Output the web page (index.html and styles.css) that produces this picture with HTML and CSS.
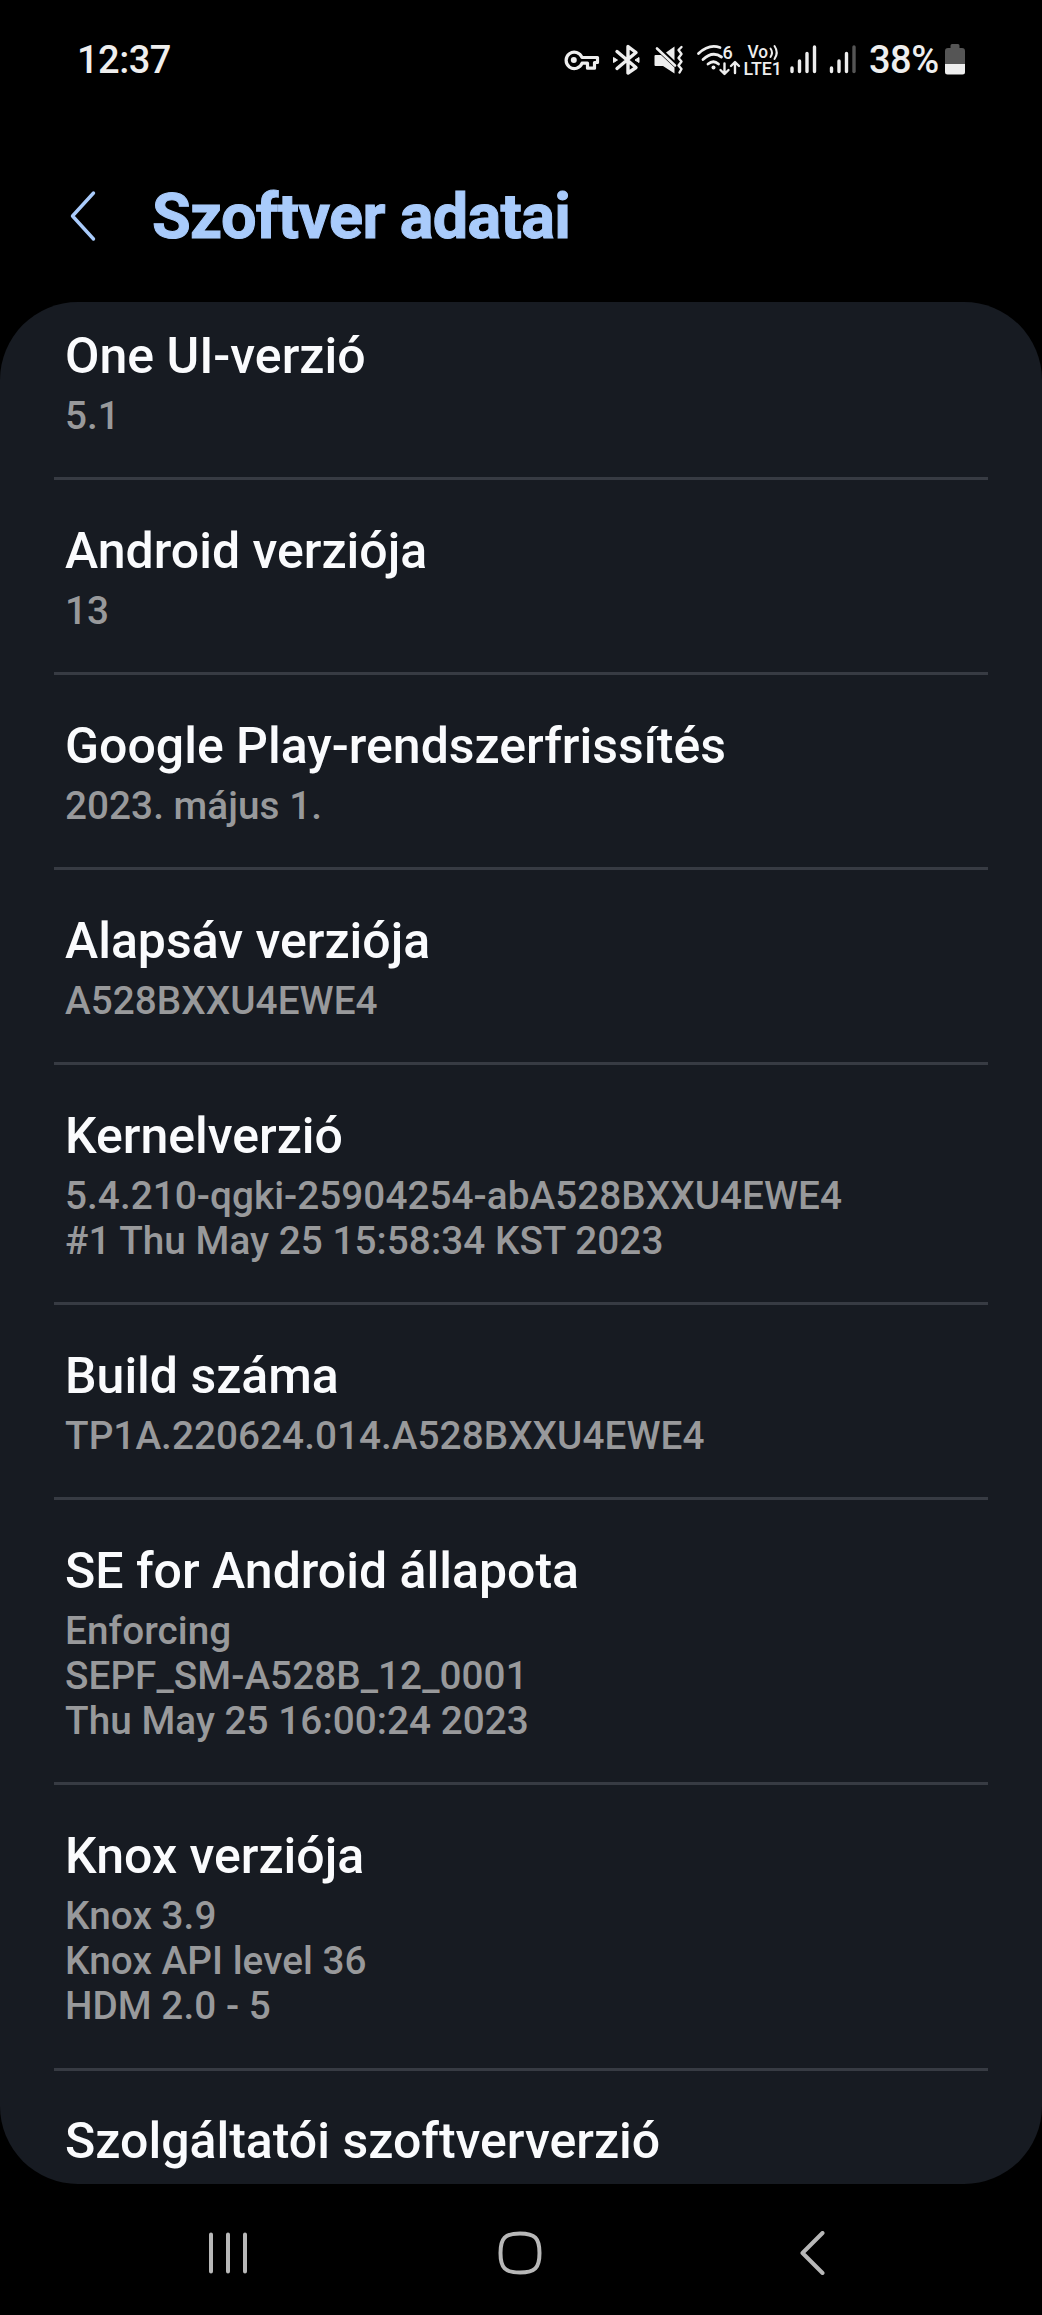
FILE: index.html
```html
<!DOCTYPE html>
<html lang="hu">
<head>
    <meta charset="UTF-8">
    <meta name="viewport" content="width=device-width, initial-scale=1.0">
    <title>Szoftver adatai</title>
    <link rel="stylesheet" href="styles.css">
</head>

<body>
    <div class="statusbar">
        <span class="clock">12:37</span>
        <div class="status-icons">
            <svg class="status-svg" width="329" height="60" viewBox="540 30 329 60">
                <!-- VPN key -->
                <path d="M582 57.5H597.5V62.5H594.5V68.2H587.5V63.2H582A8.2 8.2 0 1 1 582 57.5Z" fill="none" stroke="#eee" stroke-width="3.2" stroke-linejoin="round"/>
                <circle cx="573.8" cy="60" r="3" fill="#eee"/>
                <!-- Bluetooth -->
                <path d="M617 51.5L636 67.5L628 73V46.5L636 52.5L617 68.5" fill="none" stroke="#eee" stroke-width="3.4" stroke-linejoin="round" stroke-linecap="round"/>
                <path d="M613.5 57.5L617.5 60L613.5 62.5ZM639 57.5L635 60L639 62.5Z" fill="#eee" stroke="#eee"/>
                <!-- Mute, vibrate -->
                <path d="M655.5 55H661L674.5 67.5V73.5L663 66H655.5Q654.5 66 654.5 65V56Q654.5 55 655.5 55ZM666 52.5L674.5 46.5V60.5Z" fill="#eee"/>
                <path d="M657 48.5L675 65.5" stroke="#eee" stroke-width="2.6" stroke-linecap="round"/>
                <path d="M681.5 47L678.5 50L681.5 54L678.5 58L681.5 61.5L678.5 65.5L681.5 69L679.5 72.5" fill="none" stroke="#eee" stroke-width="2.4" stroke-linejoin="round" stroke-linecap="round"/>
                <!-- Wi-Fi 6 -->
                <path d="M698.5 53.5Q709 43.5 720 47.5M703 59.5Q712.5 50.5 721.5 57M708 64Q713.5 59.5 718.5 64" fill="none" stroke="#eee" stroke-width="2.8" stroke-linecap="round"/>
                <circle cx="713.5" cy="67.5" r="2" fill="#eee"/>
                <text x="722.5" y="58.5" class="wifi-gen">6</text>
                <path d="M724.5 63.5V73.5M720.5 70L724.5 74L728.5 70M735 73V62.5M731 66L735 62L739 66" fill="none" stroke="#eee" stroke-width="2.4" stroke-linecap="round" stroke-linejoin="round"/>
                <!-- VoLTE -->
                <text x="747.5" y="58" class="volte" textLength="20.5" lengthAdjust="spacingAndGlyphs">Vo</text>
                <path d="M770.5 48.5Q773.5 52.5 770.5 57M774.5 46Q779 52.5 774.5 59" fill="none" stroke="#eee" stroke-width="2" stroke-linecap="round"/>
                <text x="743.5" y="74.5" class="volte" textLength="38.5" lengthAdjust="spacingAndGlyphs">LTE1</text>
                <!-- Signal 1 -->
                <path d="M792 68V71.5M799.5 61V71.5M807 53.5V71.5M814.5 47V71.5" stroke="#eee" stroke-width="3.4" stroke-linecap="round"/>
                <!-- Signal 2 -->
                <path d="M831.5 68V71.5M839 61V71.5M846.5 53.5V71.5" stroke="#eee" stroke-width="3.4" stroke-linecap="round"/>
                <path d="M854 47V71.5" stroke="#555" stroke-width="3.4" stroke-linecap="round"/>
            </svg>
            <span class="percent">38%</span>
            <svg class="battery" width="20" height="31" viewBox="0 0 20 31">
                <path d="M5.5 1.5Q5.5 0 7 0H13Q14.5 0 14.5 1.5V4H17Q20 4 20 7V20H0V7Q0 4 3 4H5.5Z" fill="#555"/>
                <path d="M0 20H20V28Q20 30.5 17.5 30.5H2.5Q0 30.5 0 28Z" fill="#eee"/>
            </svg>
        </div>
    </div>

    <header class="header">
        <svg class="back" width="26" height="52" viewBox="0 0 26 52">
            <path d="M23.5 3L2.5 26L23.5 49" fill="none" stroke="#a9cbfb" stroke-width="3.4" stroke-linecap="round" stroke-linejoin="round"/>
        </svg>
        <h1>Szoftver adatai</h1>
    </header>

    <main class="card">
        <div class="item">
            <h2>One UI-verzió</h2>
            <p>5.1</p>
        </div>
        <div class="item">
            <h2>Android verziója</h2>
            <p>13</p>
        </div>
        <div class="item">
            <h2>Google Play-rendszerfrissítés</h2>
            <p>2023. május 1.</p>
        </div>
        <div class="item">
            <h2>Alapsáv verziója</h2>
            <p>A528BXXU4EWE4</p>
        </div>
        <div class="item">
            <h2>Kernelverzió</h2>
            <p>5.4.210-qgki-25904254-abA528BXXU4EWE4<br>#1 Thu May 25 15:58:34 KST 2023</p>
        </div>
        <div class="item">
            <h2>Build száma</h2>
            <p>TP1A.220624.014.A528BXXU4EWE4</p>
        </div>
        <div class="item">
            <h2>SE for Android állapota</h2>
            <p>Enforcing<br>SEPF_SM-A528B_12_0001<br>Thu May 25 16:00:24 2023</p>
        </div>
        <div class="item">
            <h2>Knox verziója</h2>
            <p>Knox 3.9<br>Knox API level 36<br>HDM 2.0 - 5</p>
        </div>
        <div class="item">
            <h2>Szolgáltatói szoftververzió</h2>
        </div>
    </main>

    <nav class="navbar">
        <svg width="40" height="44" viewBox="0 0 40 44">
            <path d="M3 3.5V40.5M20 3.5V40.5M37 3.5V40.5" stroke="#b8b8b8" stroke-width="4" stroke-linecap="round"/>
        </svg>
        <svg width="44" height="44" viewBox="0 0 44 44">
            <path d="M22 2.5C37 2.5 41.5 7 41.5 22S37 41.5 22 41.5S2.5 37 2.5 22S7 2.5 22 2.5Z" fill="none" stroke="#b8b8b8" stroke-width="4"/>
        </svg>
        <svg width="25" height="44" viewBox="0 0 25 44">
            <path d="M22.5 2L2.5 22L22.5 42" fill="none" stroke="#b8b8b8" stroke-width="4" stroke-linecap="round" stroke-linejoin="round"/>
        </svg>
    </nav>
</body>
</html>
```
FILE: styles.css
```css
* {
    box-sizing: border-box;
}

body {
    margin: 0;
    height: 2315px;
    background-color: #000;
    color: #fafbfd;
    font-family: Roboto, sans-serif;
    font-weight: 500;
    overflow: hidden;
}

.statusbar {
    display: flex;
    justify-content: space-between;
    height: 120px;
    padding: 30px 77px 0 77px;
    color: #eee;
    font-size: 38px;
    line-height: 60px;
}

.clock {
    letter-spacing: -0.5px;
}

.status-icons {
    display: flex;
}

.percent {
    width: 70px;
    letter-spacing: -0.5px;
}

.battery {
    margin: 14px 0 0 6px;
}

.wifi-gen {
    fill: #eee;
    font-size: 18px;
}

.volte {
    fill: #eee;
    font-size: 17.5px;
}

.header {
    display: flex;
    align-items: center;
    height: 182px;
    padding: 11px 0 0 70px;
}

.header h1 {
    margin: 0 0 0 56px;
    color: #a9cbfb;
    font-size: 63px;
    font-weight: 700;
    line-height: 80px;
    letter-spacing: -0.7px;
    -webkit-text-stroke: 1px #a9cbfb; /* чуть жирнее обычного bold */
}

.back {
    margin-top: -2px;
}

/* Карточка со списком */
.card {
    height: 1882px;
    padding: 0 54px;
    background-color: #171b22;
    border-radius: 78px;
    overflow: hidden;
}

.item {
    padding: 42.5px 11px 39.2px;
    border-bottom: 3px solid #373b43;
}

.item:first-child {
    padding-top: 26px;
}

.item:last-child {
    border-bottom: none;
}

.item h2 {
    margin: 0;
    font-size: 50px;
    font-weight: 500;
    line-height: 56px;
}

.item p {
    margin: 9px 0 0;
    color: #98999b;
    font-size: 38.7px;
    line-height: 45.2px;
    letter-spacing: 0.05px;
}

/* Нижняя панель навигации */
.navbar {
    display: flex;
    align-items: center;
    height: 131px;
    padding: 6px 0 0 208px;
}

.navbar svg:nth-child(2) {
    margin-left: 250px;
}

.navbar svg:nth-child(3) {
    margin-left: 258px;
}
```
